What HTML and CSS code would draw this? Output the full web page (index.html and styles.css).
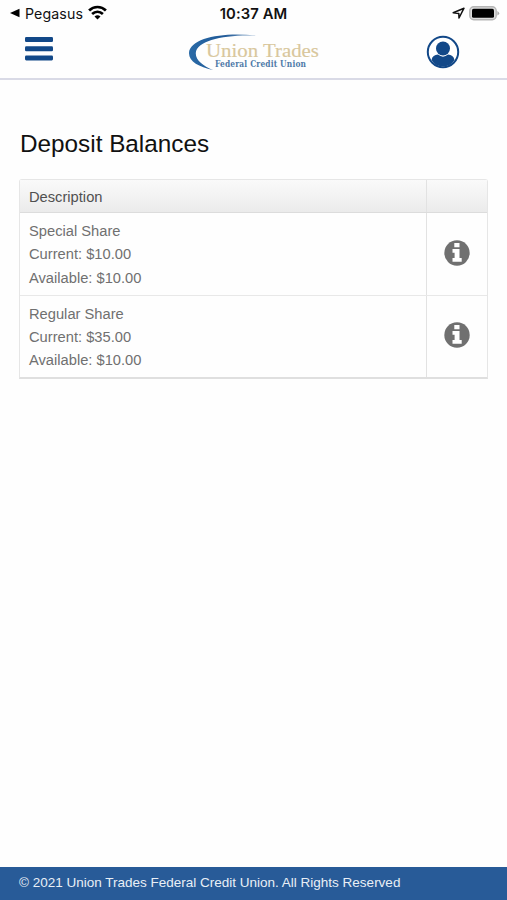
FILE: index.html
```html
<!DOCTYPE html>
<html lang="en">
<head>
<meta charset="utf-8">
<title>Deposit Balances</title>
<link rel="stylesheet" href="styles.css">
</head>
<body>
<div class="status">
  <div class="status-left">
    <svg width="10" height="10" viewBox="0 0 10 10"><path d="M0 5 9.5 .8V9.2Z"/></svg>
    <span class="back">Pegasus</span>
    <svg class="wifi" width="19" height="15" viewBox="0 0 19 15"><g fill="none" stroke="#000" stroke-width="2.7"><path d="M1.1 5.5C5.8 .8 13.2 .8 17.9 5.5"/><path d="M4.1 9C7.3 6 11.7 6 14.9 9"/></g><path d="M9.5 14.4 6.5 11.5Q9.5 9 12.5 11.5Z"/></svg>
  </div>
  <div class="time">10:37 AM</div>
  <div class="status-right">
    <svg width="13" height="12" viewBox="0 0 13 12"><path d="M1.2 5.800 12 1.200 7 11 6.800 6.400Z" fill="none" stroke="#111" stroke-width="1.500" stroke-linejoin="round"/></svg>
    <svg width="31" height="15" viewBox="0 0 31 15"><rect x=".8" y=".8" width="26.4" height="13" rx="4" fill="#ddd" stroke="#b5b5b5" stroke-width="1.4"/><rect x="3" y="2.800" width="22" height="9" rx="1.6"/><path d="M28.400 5Q32 7.300 28.400 9.600Z" fill="#aaa"/></svg>
  </div>
</div>
<header class="header">
  <svg class="menu" width="28" height="24" viewBox="0 0 28 24" fill="#124888"><rect width="28" height="5" rx="1.3"/><rect y="9.2" width="28" height="5" rx="1.3"/><rect y="18.4" width="28" height="5" rx="1.3"/></svg>
  <svg class="logo" width="134" height="38" viewBox="0 0 134 38">
    <defs><linearGradient id="arc"><stop offset="0" stop-color="#2a6aa6"/><stop offset=".5" stop-color="#205a98"/><stop offset="1" stop-color="#8aa9ca"/></linearGradient></defs>
    <path d="M70 2.800C38-1.500 2 4 1 20C.8 28.500 11 34 25 37C15 32.500 7.500 27.500 7.800 20C8.500 7.500 38 1 70 2.800Z" fill="url(#arc)"/>
    <text class="logo-name" x="18" y="23.800" textLength="113" lengthAdjust="spacingAndGlyphs">Union Trades</text>
    <text class="logo-sub" x="27" y="34" textLength="91">Federal Credit Union</text>
  </svg>
  <svg class="user" width="34" height="34" viewBox="0 0 34 34"><circle cx="17" cy="17" r="15.200" fill="#fff" stroke="#124888" stroke-width="2"/><circle cx="17" cy="13.500" r="7" fill="#124888"/><path d="M5.500 25C6.300 21.500 8.500 19.800 12 19.600Q17 23.800 22 19.600C25.500 19.800 27.700 21.500 28.500 25Q24.500 31.500 17 31.500T5.500 25Z" fill="#124888"/></svg>
</header>
<main class="main">
  <h1>Deposit Balances</h1>
  <section class="table">
    <div class="row head"><div class="cell">Description</div><div class="info"></div></div>
    <div class="row">
      <div class="cell"><div>Special Share</div><div>Current: $10.00</div><div>Available: $10.00</div></div>
      <div class="info"><svg width="26" height="26" viewBox="0 0 26 26"><circle cx="13" cy="13" r="12.700" fill="#707070"/><path d="M10.300 3h5.200v4.200h-5.200zM8.500 9h7v8.900h2.200v3.800H8.500v-3.800h2.100v-5.100H8.500z" fill="#fff"/></svg></div>
    </div>
    <div class="row">
      <div class="cell"><div>Regular Share</div><div>Current: $35.00</div><div>Available: $10.00</div></div>
      <div class="info"><svg width="26" height="26" viewBox="0 0 26 26"><circle cx="13" cy="13" r="12.700" fill="#707070"/><path d="M10.300 3h5.200v4.200h-5.200zM8.500 9h7v8.900h2.200v3.800H8.500v-3.800h2.100v-5.100H8.500z" fill="#fff"/></svg></div>
    </div>
  </section>
</main>
<footer class="footer">© 2021 Union Trades Federal Credit Union. All Rights Reserved</footer>
</body>
</html>
```
FILE: styles.css
```css
* { box-sizing: border-box; }
body {
  margin: 0;
  height: 900px;
  display: flex;
  flex-direction: column;
  background: #fefefe;
  font-family: "Liberation Sans", Arial, sans-serif;
}
svg { display: block; flex: none; }
.status {
  height: 28px;
  display: grid;
  grid-template-columns: 1fr auto 1fr;
  align-items: center;
  padding: 0 7px 2px 10px;
  font-family: Inter, sans-serif;
  color: #111;
}
.status-left, .status-right { display: flex; align-items: center; }
.status-right { justify-content: flex-end; gap: 4px; }
.back { margin: 0 5px; font-size: 14.2px; letter-spacing: .1px; }
.wifi { margin-top: -1px; }
.time { margin: 2px 0 0 -3px; font-size: 14.8px; font-weight: 600; letter-spacing: .1px; }
.header {
  height: 52px;
  display: flex;
  align-items: flex-start;
  justify-content: space-between;
  padding: 5px 47px 0 25px;
  border-bottom: 2px solid #d9dae6;
}
.menu { margin-top: 4px; }
.logo { margin: 0 -30px 0 0; }
.user { margin-top: 2px; }
.logo-name { font: 19.6px "Liberation Serif", serif; fill: #d9c79c; stroke: #d9c79c; stroke-width: .15px; }
.logo-sub { font: bold condensed 8.3px "DejaVu Serif Condensed", "DejaVu Serif", serif; fill: #4f7aa8; }
.main { flex: 1; padding: 50px 19px 0; }
h1 {
  margin: 0 0 21px 1px;
  font-size: 24.3px;
  line-height: 28px;
  font-weight: 400;
  color: #111;
}
.table {
  border: 1px solid #e6e6e6;
  border-bottom: 2px solid #dfdfdf;
  border-radius: 3px 3px 0 0;
}
.row {
  display: grid;
  grid-template-columns: 1fr 61px;
  grid-template-rows: 100%;
  height: 82px;
  font-size: 14.7px;
  line-height: 23.3px;
  color: #707070;
}
.row + .row + .row { border-top: 1px solid #e8e8e8; line-height: 23.2px; }
.head {
  height: 33px;
  color: #505050;
  background: linear-gradient(#fafafa, #ebebeb);
  border-bottom: 1px solid #dcdcdc;
}
.cell { padding: 7px 9px 0; }
.head .cell { padding-top: 6px; }
.info {
  display: flex;
  align-items: center;
  justify-content: center;
  padding-bottom: 3px;
  border-left: 1px solid #e2e2e2;
}
.footer {
  height: 33px;
  padding-left: 19px;
  background: #285b98;
  color: #e9eff6;
  font-size: 13.5px;
  line-height: 31px;
}
```
